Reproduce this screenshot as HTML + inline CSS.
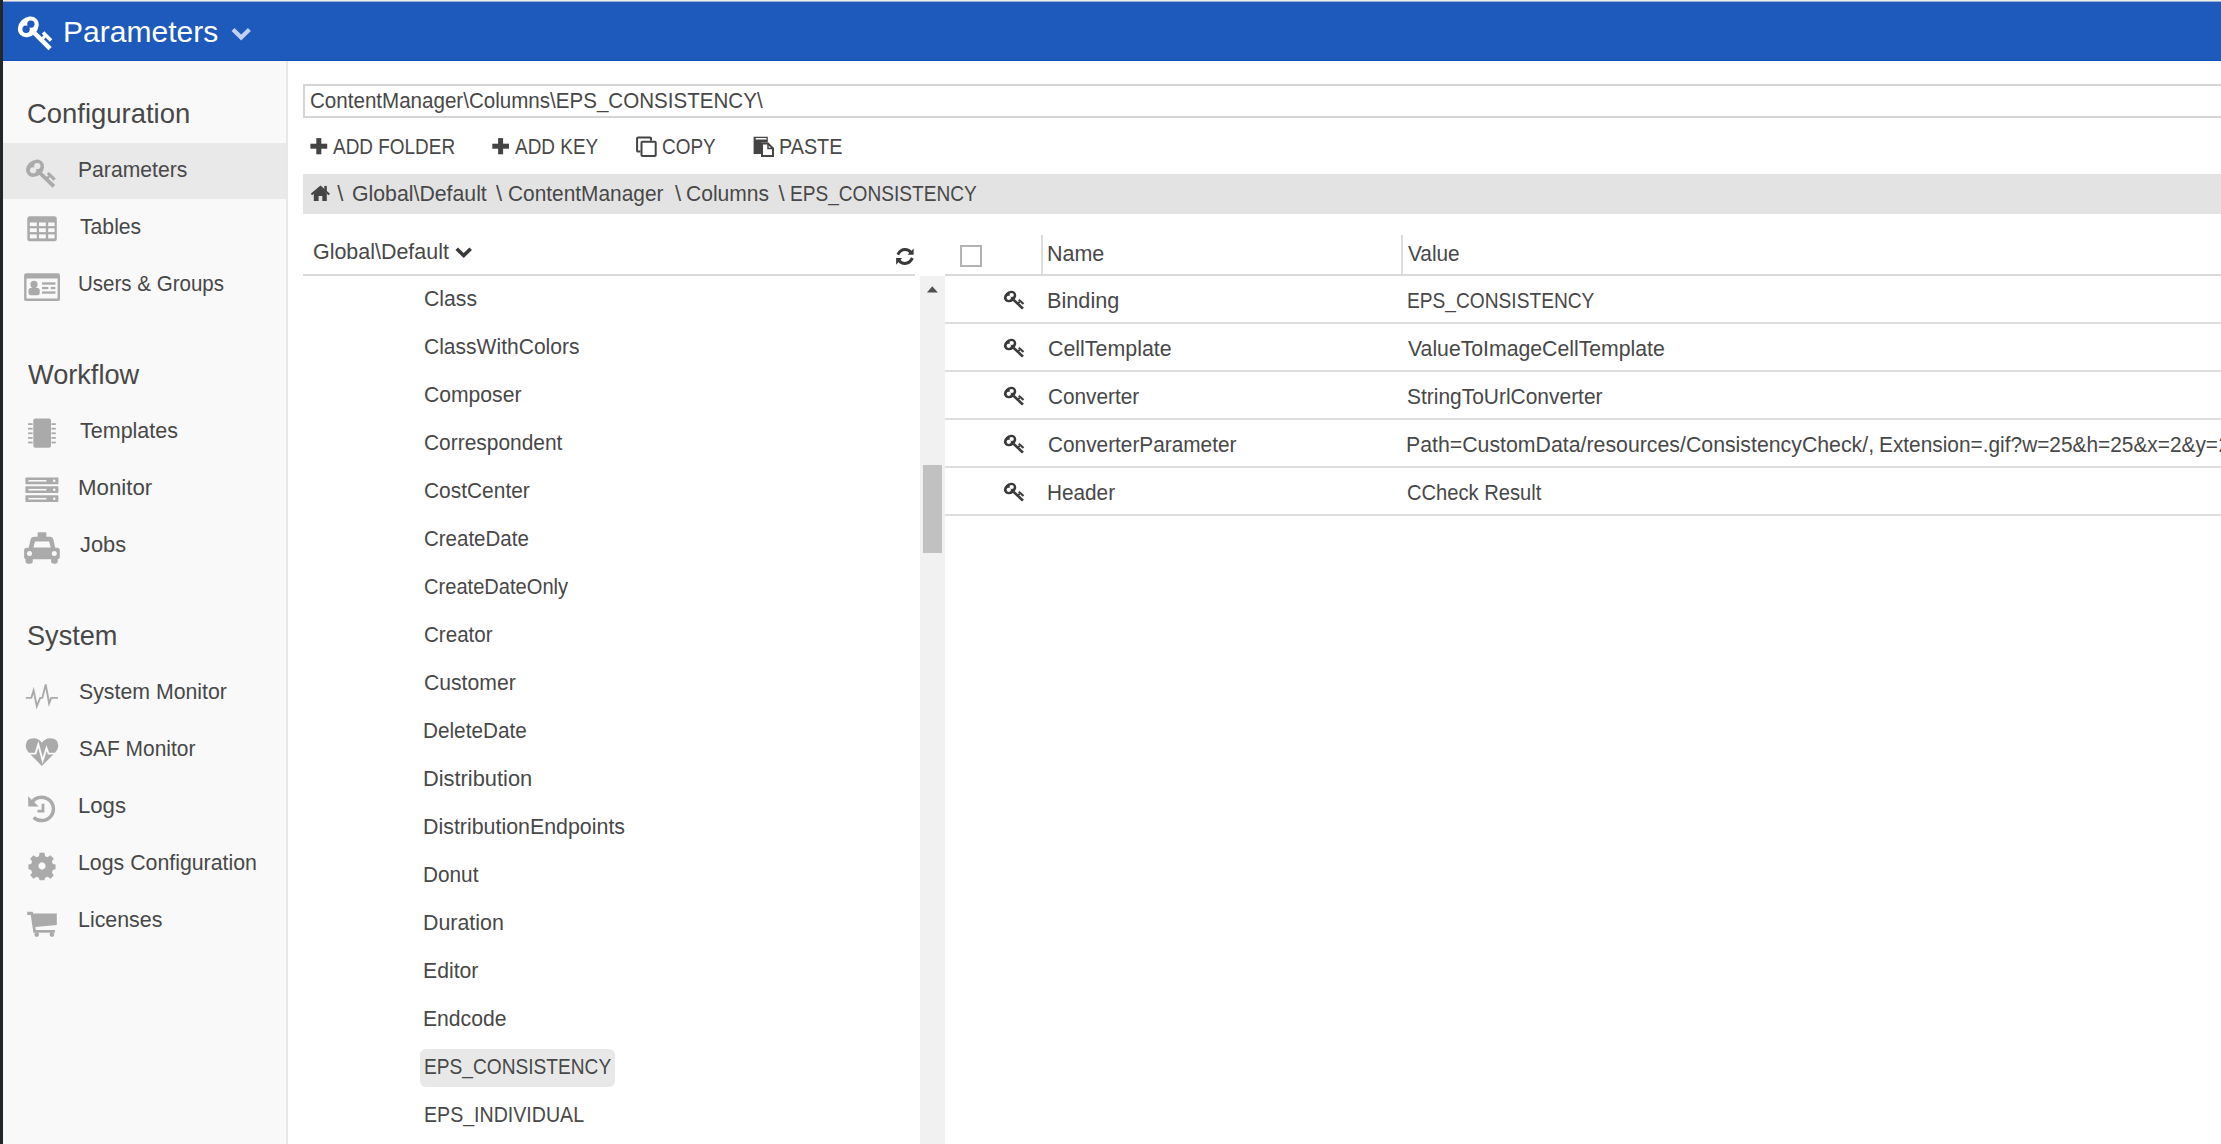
<!DOCTYPE html>
<html><head><meta charset="utf-8">
<style>
*{margin:0;padding:0;box-sizing:border-box}
html,body{width:2221px;height:1144px;overflow:hidden;background:#fff;font-family:"Liberation Sans",sans-serif;color:#3b3b3b}
.a{position:absolute}
.t{position:absolute;white-space:pre;transform-origin:0 0}
</style></head>
<body>
<!-- frame -->
<div class="a" style="left:0;top:0;width:2221px;height:1px;background:#efeee9;z-index:4"></div>
<div class="a" style="left:0;top:1px;width:2221px;height:1px;background:#9aaed6;z-index:4"></div>
<div class="a" style="left:0;top:2px;width:2221px;height:59px;background:#1d5abc"></div>
<div class="a" style="left:0;top:60px;width:2221px;height:1px;background:#1450b5"></div>
<div class="a" style="left:0;top:61px;width:287px;height:1083px;background:#f9f9f9"></div>
<div class="a" style="left:286px;top:61px;width:2px;height:1083px;background:#e8e8e8"></div>
<div class="a" style="left:3px;top:143px;width:283px;height:56px;background:#e9e9e9"></div>
<div class="a" style="left:0;top:0;width:3px;height:1144px;background:#22272a;z-index:5"></div>

<!-- input -->
<div class="a" style="left:303px;top:84px;width:1930px;height:34px;border:2px solid #d5d5d5;background:#fff"></div>
<!-- breadcrumb bar -->
<div class="a" style="left:303px;top:174px;width:1930px;height:40px;background:#e3e3e3"></div>
<!-- tree header underline -->
<div class="a" style="left:303px;top:274px;width:612px;height:2px;background:#d9d9d9"></div>
<!-- table header underline -->
<div class="a" style="left:945px;top:274px;width:1290px;height:2px;background:#d9d9d9"></div>
<!-- column separators -->
<div class="a" style="left:1041px;top:235px;width:1.5px;height:40px;background:#dcdcdc"></div>
<div class="a" style="left:1401px;top:235px;width:1.5px;height:40px;background:#dcdcdc"></div>
<!-- row lines -->
<div class="a" style="left:945px;top:322px;width:1290px;height:2px;background:#dedede"></div>
<div class="a" style="left:945px;top:370px;width:1290px;height:2px;background:#dedede"></div>
<div class="a" style="left:945px;top:418px;width:1290px;height:2px;background:#dedede"></div>
<div class="a" style="left:945px;top:466px;width:1290px;height:2px;background:#dedede"></div>
<div class="a" style="left:945px;top:514px;width:1290px;height:2px;background:#dedede"></div>
<!-- scrollbar -->
<div class="a" style="left:919.5px;top:276px;width:25px;height:868px;background:#f1f1f1"></div>
<div class="a" style="left:923px;top:465px;width:18.5px;height:88px;background:#c1c1c1"></div>
<!-- selected tree item -->
<div class="a" style="left:420px;top:1049px;width:195px;height:38px;background:#e8e8e8;border-radius:6px"></div>
<!-- checkbox -->
<div class="a" style="left:960px;top:244.5px;width:22.3px;height:22.3px;border:2px solid #b3b3b3;background:#fff"></div>

<div class="t" style="left:62.66px;top:17.00px;font-size:29.5px;line-height:29.5px;color:#ffffff;transform:scaleX(1.0180);">Parameters</div>
<div class="t" style="left:26.84px;top:99.00px;font-size:28.5px;line-height:28.5px;color:#484848;transform:scaleX(0.9629);">Configuration</div>
<div class="t" style="left:27.80px;top:360.00px;font-size:28.5px;line-height:28.5px;color:#484848;transform:scaleX(0.9530);">Workflow</div>
<div class="t" style="left:26.85px;top:621.00px;font-size:28.5px;line-height:28.5px;color:#484848;transform:scaleX(0.9522);">System</div>
<div class="t" style="left:77.94px;top:159.00px;font-size:21.6px;line-height:21.6px;color:#484848;transform:scaleX(0.9789);">Parameters</div>
<div class="t" style="left:79.90px;top:216.00px;font-size:21.6px;line-height:21.6px;color:#484848;transform:scaleX(0.9806);">Tables</div>
<div class="t" style="left:78.00px;top:273.00px;font-size:21.6px;line-height:21.6px;color:#484848;transform:scaleX(0.9503);">Users &amp; Groups</div>
<div class="t" style="left:79.90px;top:420.00px;font-size:21.6px;line-height:21.6px;color:#484848;transform:scaleX(0.9959);">Templates</div>
<div class="t" style="left:77.84px;top:477.00px;font-size:21.6px;line-height:21.6px;color:#484848;transform:scaleX(1.0300);">Monitor</div>
<div class="t" style="left:79.90px;top:534.00px;font-size:21.6px;line-height:21.6px;color:#484848;transform:scaleX(1.0089);">Jobs</div>
<div class="t" style="left:78.91px;top:681.00px;font-size:21.6px;line-height:21.6px;color:#484848;transform:scaleX(0.9859);">System Monitor</div>
<div class="t" style="left:78.93px;top:738.00px;font-size:21.6px;line-height:21.6px;color:#484848;transform:scaleX(0.9697);">SAF Monitor</div>
<div class="t" style="left:77.85px;top:795.00px;font-size:21.6px;line-height:21.6px;color:#484848;transform:scaleX(1.0250);">Logs</div>
<div class="t" style="left:77.93px;top:852.00px;font-size:21.6px;line-height:21.6px;color:#484848;transform:scaleX(0.9871);">Logs Configuration</div>
<div class="t" style="left:77.92px;top:909.00px;font-size:21.6px;line-height:21.6px;color:#484848;transform:scaleX(0.9892);">Licenses</div>
<div class="t" style="left:309.87px;top:90.00px;font-size:22px;line-height:22px;color:#484848;transform:scaleX(0.9348);">ContentManager\Columns\EPS_CONSISTENCY\</div>
<div class="t" style="left:333.00px;top:136.00px;font-size:22px;line-height:22px;color:#484848;transform:scaleX(0.8610);">ADD FOLDER</div>
<div class="t" style="left:515.00px;top:136.00px;font-size:22px;line-height:22px;color:#484848;transform:scaleX(0.8615);">ADD KEY</div>
<div class="t" style="left:662.14px;top:136.00px;font-size:22px;line-height:22px;color:#484848;transform:scaleX(0.8607);">COPY</div>
<div class="t" style="left:779.00px;top:136.00px;font-size:22px;line-height:22px;color:#484848;transform:scaleX(0.8985);">PASTE</div>
<div class="t" style="left:337.30px;top:183.00px;font-size:22px;line-height:22px;color:#484848;">\</div>
<div class="t" style="left:351.63px;top:183.00px;font-size:22px;line-height:22px;color:#484848;transform:scaleX(0.9667);">Global\Default</div>
<div class="t" style="left:496.00px;top:183.00px;font-size:22px;line-height:22px;color:#484848;">\</div>
<div class="t" style="left:508.45px;top:183.00px;font-size:22px;line-height:22px;color:#484848;transform:scaleX(0.9485);">ContentManager</div>
<div class="t" style="left:675.00px;top:183.00px;font-size:22px;line-height:22px;color:#484848;">\</div>
<div class="t" style="left:686.04px;top:183.00px;font-size:22px;line-height:22px;color:#484848;transform:scaleX(0.9565);">Columns</div>
<div class="t" style="left:778.50px;top:183.00px;font-size:22px;line-height:22px;color:#484848;">\</div>
<div class="t" style="left:789.56px;top:183.00px;font-size:22px;line-height:22px;color:#484848;transform:scaleX(0.8676);">EPS_CONSISTENCY</div>
<div class="t" style="left:313.23px;top:241.00px;font-size:22px;line-height:22px;color:#484848;transform:scaleX(0.9746);">Global\Default</div>
<div class="t" style="left:1047.05px;top:243.00px;font-size:22px;line-height:22px;color:#484848;transform:scaleX(0.9768);">Name</div>
<div class="t" style="left:1408.40px;top:243.00px;font-size:22px;line-height:22px;color:#484848;transform:scaleX(0.9463);">Value</div>
<div class="t" style="left:424.24px;top:288.00px;font-size:22px;line-height:22px;color:#484848;transform:scaleX(0.9642);">Class</div>
<div class="t" style="left:424.24px;top:336.00px;font-size:22px;line-height:22px;color:#484848;transform:scaleX(0.9565);">ClassWithColors</div>
<div class="t" style="left:424.24px;top:384.00px;font-size:22px;line-height:22px;color:#484848;transform:scaleX(0.9600);">Composer</div>
<div class="t" style="left:424.25px;top:432.00px;font-size:22px;line-height:22px;color:#484848;transform:scaleX(0.9510);">Correspondent</div>
<div class="t" style="left:424.25px;top:480.00px;font-size:22px;line-height:22px;color:#484848;transform:scaleX(0.9509);">CostCenter</div>
<div class="t" style="left:424.27px;top:528.00px;font-size:22px;line-height:22px;color:#484848;transform:scaleX(0.9315);">CreateDate</div>
<div class="t" style="left:424.29px;top:576.00px;font-size:22px;line-height:22px;color:#484848;transform:scaleX(0.9134);">CreateDateOnly</div>
<div class="t" style="left:424.27px;top:624.00px;font-size:22px;line-height:22px;color:#484848;transform:scaleX(0.9347);">Creator</div>
<div class="t" style="left:424.24px;top:672.00px;font-size:22px;line-height:22px;color:#484848;transform:scaleX(0.9617);">Customer</div>
<div class="t" style="left:423.32px;top:720.00px;font-size:22px;line-height:22px;color:#484848;transform:scaleX(0.9421);">DeleteDate</div>
<div class="t" style="left:423.21px;top:768.00px;font-size:22px;line-height:22px;color:#484848;transform:scaleX(0.9925);">Distribution</div>
<div class="t" style="left:423.26px;top:816.00px;font-size:22px;line-height:22px;color:#484848;transform:scaleX(0.9717);">DistributionEndpoints</div>
<div class="t" style="left:423.31px;top:864.00px;font-size:22px;line-height:22px;color:#484848;transform:scaleX(0.9439);">Donut</div>
<div class="t" style="left:423.26px;top:912.00px;font-size:22px;line-height:22px;color:#484848;transform:scaleX(0.9713);">Duration</div>
<div class="t" style="left:423.27px;top:960.00px;font-size:22px;line-height:22px;color:#484848;transform:scaleX(0.9636);">Editor</div>
<div class="t" style="left:423.28px;top:1008.00px;font-size:22px;line-height:22px;color:#484848;transform:scaleX(0.9607);">Endcode</div>
<div class="t" style="left:424.26px;top:1056.00px;font-size:22px;line-height:22px;color:#484848;transform:scaleX(0.8700);">EPS_CONSISTENCY</div>
<div class="t" style="left:424.22px;top:1104.00px;font-size:22px;line-height:22px;color:#484848;transform:scaleX(0.8904);">EPS_INDIVIDUAL</div>
<div class="t" style="left:1047.03px;top:290.00px;font-size:22px;line-height:22px;color:#484848;transform:scaleX(0.9857);">Binding</div>
<div class="t" style="left:1406.66px;top:290.00px;font-size:22px;line-height:22px;color:#484848;transform:scaleX(0.8709);">EPS_CONSISTENCY</div>
<div class="t" style="left:1048.03px;top:338.00px;font-size:22px;line-height:22px;color:#484848;transform:scaleX(0.9720);">CellTemplate</div>
<div class="t" style="left:1408.40px;top:338.00px;font-size:22px;line-height:22px;color:#484848;transform:scaleX(0.9645);">ValueToImageCellTemplate</div>
<div class="t" style="left:1048.06px;top:386.00px;font-size:22px;line-height:22px;color:#484848;transform:scaleX(0.9442);">Converter</div>
<div class="t" style="left:1407.45px;top:386.00px;font-size:22px;line-height:22px;color:#484848;transform:scaleX(0.9520);">StringToUrlConverter</div>
<div class="t" style="left:1048.05px;top:434.00px;font-size:22px;line-height:22px;color:#484848;transform:scaleX(0.9455);">ConverterParameter</div>
<div class="t" style="left:1406.46px;top:434.00px;font-size:22px;line-height:22px;color:#484848;transform:scaleX(0.9679);">Path=CustomData/resources/ConsistencyCheck/,</div>
<div class="t" style="left:1047.11px;top:482.00px;font-size:22px;line-height:22px;color:#484848;transform:scaleX(0.9429);">Header</div>
<div class="t" style="left:1407.48px;top:482.00px;font-size:22px;line-height:22px;color:#484848;transform:scaleX(0.9158);">CCheck Result</div>
<div class="t" style="left:1878.70px;top:434.00px;font-size:22px;line-height:22px;color:#484848;transform:scaleX(0.9476);">Extension=.gif?w=25&amp;h=25&amp;x=2&amp;y=</div>
<div class="t" style="left:2218.50px;top:434.00px;font-size:22px;line-height:22px;color:#484848;">2</div>

<svg class="a" style="left:0;top:0;z-index:6" width="2221" height="1144" viewBox="0 0 2221 1144">
<defs>
 <g id="key">
  <ellipse cx="10.8" cy="10.8" rx="11.4" ry="9.3" transform="rotate(-45 10.8 10.8)"/>
  <path d="M15.2 18.4 L18.4 15.2 L34.2 31 L31 34.2 Z"/>
  <path d="M24.3 17.7 L26.8 15.2 L34.8 23.2 L32.3 25.7 Z"/>
  <path d="M21.6 23.8 L26.3 19.1 L28.4 21.2 L23.7 25.9 Z"/>
 </g>
 <g id="holes"><circle cx="8.6" cy="13.2" r="3.7"/><circle cx="13.4" cy="8.1" r="3.7"/></g>
</defs>
<!-- header key -->
<g transform="translate(17.5 16)"><use href="#key" fill="#fff"/><use href="#holes" fill="#1d5abc"/></g>
<path d="M233 29.5 L241.2 37.5 L249.4 29.5" stroke="#c3d0ee" stroke-width="4.2" fill="none"/>

<!-- sidebar icons -->
<g fill="#aaaaaa">
 <g transform="translate(25.7 159.3) scale(0.865 0.83)"><use href="#key"/><use href="#holes" fill="#e9e9e9"/></g>
 <!-- table -->
 <rect x="27.3" y="216.3" width="29.5" height="25" rx="2.5"/>
 <g fill="#f9f9f9">
  <rect x="29.8" y="222.5" width="7" height="3.6"/><rect x="39" y="222.5" width="6.8" height="3.6"/><rect x="48.2" y="222.5" width="6.4" height="3.6"/>
  <rect x="29.8" y="228.3" width="7" height="3.8"/><rect x="39" y="228.3" width="6.8" height="3.8"/><rect x="48.2" y="228.3" width="6.4" height="3.8"/>
  <rect x="29.8" y="234.4" width="7" height="4"/><rect x="39" y="234.4" width="6.8" height="4"/><rect x="48.2" y="234.4" width="6.4" height="4"/>
 </g>
 <!-- id card -->
 <path fill-rule="evenodd" d="M26.3 273.3 H57.8 Q60 273.3 60 275.5 V298.9 Q60 301.1 57.8 301.1 H26.3 Q24.1 301.1 24.1 298.9 V275.5 Q24.1 273.3 26.3 273.3 Z M26.5 278.6 V298.5 H57.6 V278.6 Z"/>
 <circle cx="34" cy="284.4" r="3.6"/>
 <rect x="28.5" y="288" width="11.2" height="7.3" rx="2.2"/>
 <rect x="42" y="282.3" width="13.4" height="2.4"/>
 <rect x="42" y="286.9" width="6.3" height="2.3"/><rect x="50.7" y="286.9" width="4.7" height="2.3"/>
 <rect x="42" y="291.4" width="13.4" height="2.3"/>
 <!-- chip -->
 <rect x="33.3" y="418.4" width="17.7" height="29.4" rx="2"/>
 <g><rect x="28.1" y="423.2" width="4.5" height="1.8"/><rect x="28.1" y="427.8" width="4.5" height="1.8"/><rect x="28.1" y="432.4" width="4.5" height="1.8"/><rect x="28.1" y="437" width="4.5" height="1.8"/><rect x="28.1" y="441.6" width="4.5" height="1.8"/>
 <rect x="51.5" y="423.2" width="4.3" height="1.8"/><rect x="51.5" y="427.8" width="4.3" height="1.8"/><rect x="51.5" y="432.4" width="4.3" height="1.8"/><rect x="51.5" y="437" width="4.3" height="1.8"/><rect x="51.5" y="441.6" width="4.3" height="1.8"/></g>
 <!-- server -->
 <rect x="25.4" y="477.4" width="33" height="6.8" rx="0.8"/>
 <rect x="25.4" y="486.3" width="33" height="6.8" rx="0.8"/>
 <rect x="25.4" y="495.3" width="33" height="6.8" rx="0.8"/>
 <g fill="#f9f9f9">
  <rect x="28.4" y="480" width="18" height="1.6"/><rect x="28.4" y="488.9" width="18" height="1.6"/><rect x="28.4" y="497.9" width="18" height="1.6"/>
  <circle cx="54.2" cy="480.8" r="1.3"/><circle cx="54.2" cy="489.7" r="1.3"/><circle cx="54.2" cy="498.7" r="1.3"/>
 </g>
 <!-- taxi -->
 <rect x="37.6" y="532.3" width="8.8" height="5.5" rx="0.6"/>
 <path d="M34.5 536.8 H50.3 Q52.8 536.8 53.4 539.5 L55.2 547.8 H57.5 Q59.8 547.8 59.8 550.3 V557 Q59.8 559.2 57.6 559.2 H26.3 Q24.1 559.2 24.1 557 V550.3 Q24.1 547.8 26.6 547.8 H28.7 L30.6 539.5 Q31.3 536.8 34.5 536.8 Z"/>
 <path fill="#f9f9f9" d="M35 541.5 H49.1 L50.7 547.6 H33.4 Z"/>
 <circle cx="29.5" cy="553.6" r="2.5" fill="#f9f9f9"/><circle cx="54.3" cy="553.6" r="2.5" fill="#f9f9f9"/>
 <rect x="25.5" y="557" width="7.3" height="6.8" rx="2.8"/><rect x="51.1" y="557" width="6.7" height="6.8" rx="2.8"/>
 <!-- pulse -->
 <polyline points="25.8,697.9 31.3,697.9 33.6,690.6 36.8,706.2 40.2,697.9 42.3,697.9 45.7,684.5 49.1,703.4 51.2,697.9 58,697.9" fill="none" stroke="#aaaaaa" stroke-width="1.9" stroke-linejoin="miter"/>
 <!-- heartbeat -->
 <path d="M41.8 765.9 L28.5 752.5 Q25.6 749.5 25.7 745.6 Q26 738.3 33.8 738.3 Q38.8 738.3 41.9 742.8 Q45 738.3 50.1 738.3 Q58 738.3 58.3 745.6 Q58.4 749.5 55.4 752.5 Z"/>
 <polyline points="24,753.6 35.5,753.6 38.3,744.5 42.7,760.5 46.5,748.2 48.6,753.6 60,753.6" fill="none" stroke="#f9f9f9" stroke-width="1.9"/>
 <!-- history -->
 <path d="M31.2 803.8 A11.7 11.7 0 1 1 33.7 817.4" fill="none" stroke="#aaaaaa" stroke-width="3.5"/>
 <path d="M28.1 796.3 L28.3 806.6 L38.6 806.6 Z"/>
 <path d="M43 803.8 V811.2 H37.5" fill="none" stroke="#aaaaaa" stroke-width="2.8"/>
 <!-- cog -->
 <g transform="translate(42 866) scale(0.93)">
  <path fill-rule="evenodd" d="M-2.6 -14.3 H2.6 L3.3 -10.6 L6 -9.4 L9.1 -11.5 L12.7 -7.9 L10.6 -4.8 L11.7 -2.2 L14.6 -1.6 V3.6 L11.7 4.2 L10.6 6.9 L12.7 10 L9.1 13.6 L6 11.5 L3.3 12.6 L2.6 15.4 H-2.6 L-3.3 12.6 L-6 11.5 L-9.1 13.6 L-12.7 10 L-10.6 6.9 L-11.7 4.2 L-14.6 3.6 V-1.6 L-11.7 -2.2 L-10.6 -4.8 L-12.7 -7.9 L-9.1 -11.5 L-6 -9.4 L-3.3 -10.6 Z M0 -3.9 A3.9 3.9 0 1 0 0.01 -3.9 Z"/>
 </g>
 <!-- cart -->
 <path d="M27.2 911.8 H32.6 L33.3 913.6 H56.8 V924.9 L35.4 927 L35.8 930 H54.9 V932.8 H33.4 L30.8 915 H27.2 Z"/>
 <circle cx="36.7" cy="934.6" r="2.3"/><circle cx="51.9" cy="934.6" r="2.3"/>
</g>

<!-- toolbar icons -->
<g fill="#444">
 <rect x="310.4" y="143.7" width="16.8" height="5"/><rect x="316.3" y="138.1" width="5" height="16.2"/>
 <rect x="492.3" y="143.7" width="16.7" height="5"/><rect x="498.1" y="138.1" width="5" height="16.2"/>
</g>
<g fill="none" stroke="#444" stroke-width="2">
 <path d="M640.5 151.6 H638 Q637.1 151.6 637.1 150.7 V138.3 Q637.1 137.4 638 137.4 H650.1 Q651 137.4 651 138.3 V140.8"/>
 <rect x="641.5" y="141.8" width="14.2" height="14.2" rx="1"/>
</g>
<path fill="#444" fill-rule="evenodd" d="M753.6 136.8 H767.8 V142.5 H761 V154 H753.6 Z M755.7 137.9 V139.6 H766.5 V137.9 Z"/>
<path d="M762 143.5 H768 L773 148.5 V156 H762 Z" fill="#fff" stroke="#444" stroke-width="2"/>
<path d="M768 143.5 V148.5 H773" fill="none" stroke="#444" stroke-width="1.5"/>

<!-- home -->
<g fill="#444">
 <path d="M310.7 193.8 L320.5 185.6 L330 193.8 L328.6 195.2 L320.5 188.4 L312.1 195.2 Z"/>
 <rect x="324.3" y="185.9" width="2.5" height="5.5"/>
 <path d="M313.8 193.6 L320.5 188 L326.8 193.6 V201 H322.3 V196.1 H318.6 V201 H313.8 Z"/>
</g>

<!-- tree header chevron -->
<path d="M456.7 248.7 L463.7 255.5 L470.7 248.7" fill="none" stroke="#3a3a3a" stroke-width="3.6"/>
<!-- refresh -->
<g fill="none" stroke="#3a3a3a" stroke-width="3">
 <path d="M897.8 254.6 Q900.5 249.6 905 249.6 Q909 249.6 910.8 252.6"/>
 <path d="M912.4 258 Q909.8 263.4 905 263.4 Q901 263.4 899.2 260.4"/>
</g>
<g fill="#3a3a3a">
 <path d="M907.6 254.7 H913.6 V248.4 Z"/>
 <path d="M896.1 257.9 H902.2 L896.1 264.8 Z"/>
</g>
<!-- scroll up arrow -->
<path d="M932.3 286.2 L937.8 292.5 H926.9 Z" fill="#505050"/>

<!-- table key icons -->
<g fill="#3a3a3a">
 <g transform="translate(1003.7 290.6) scale(0.59 0.55)"><use href="#key"/><use href="#holes" fill="#fff"/></g>
 <g transform="translate(1003.7 338.6) scale(0.59 0.55)"><use href="#key"/><use href="#holes" fill="#fff"/></g>
 <g transform="translate(1003.7 386.6) scale(0.59 0.55)"><use href="#key"/><use href="#holes" fill="#fff"/></g>
 <g transform="translate(1003.7 434.6) scale(0.59 0.55)"><use href="#key"/><use href="#holes" fill="#fff"/></g>
 <g transform="translate(1003.7 482.6) scale(0.59 0.55)"><use href="#key"/><use href="#holes" fill="#fff"/></g>
</g>
</svg>
</body></html>
